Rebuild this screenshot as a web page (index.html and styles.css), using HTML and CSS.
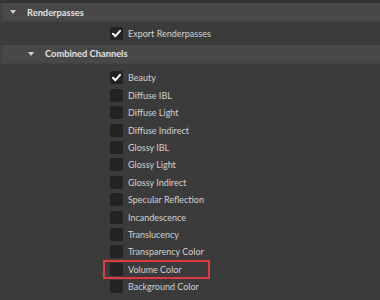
FILE: index.html
```html
<!DOCTYPE html>
<html>
<head>
<meta charset="utf-8">
<link rel="stylesheet" href="styles.css">
</head>
<body>
<div class="panel">
  <div class="header"><span class="tri"></span><span class="title">Renderpasses</span></div>
  <div class="section first">
    <div class="row"><span class="box on"><svg viewBox="0 0 13 13"><path d="M3 6.8 L5.4 9.2 L10 3.8" /></svg></span><span class="label">Export Renderpasses</span></div>
  </div>
  <div class="header sub"><span class="tri"></span><span class="title">Combined Channels</span></div>
  <div class="section list">
    <div class="row"><span class="box on"><svg viewBox="0 0 13 13"><path d="M3 6.8 L5.4 9.2 L10 3.8" /></svg></span><span class="label">Beauty</span></div>
    <div class="row"><span class="box"></span><span class="label">Diffuse IBL</span></div>
    <div class="row"><span class="box"></span><span class="label">Diffuse Light</span></div>
    <div class="row"><span class="box"></span><span class="label">Diffuse Indirect</span></div>
    <div class="row"><span class="box"></span><span class="label">Glossy IBL</span></div>
    <div class="row"><span class="box"></span><span class="label">Glossy Light</span></div>
    <div class="row"><span class="box"></span><span class="label">Glossy Indirect</span></div>
    <div class="row"><span class="box"></span><span class="label">Specular Reflection</span></div>
    <div class="row"><span class="box"></span><span class="label">Incandescence</span></div>
    <div class="row"><span class="box"></span><span class="label">Translucency</span></div>
    <div class="row"><span class="box"></span><span class="label">Transparency Color</span></div>
    <div class="row highlight"><span class="box"></span><span class="label">Volume Color</span></div>
    <div class="row"><span class="box"></span><span class="label">Background Color</span></div>
  </div>
</div>
</body>
</html>
```
FILE: styles.css
```css
html, body {
  margin: 0;
  padding: 0;
  background: #3b3b3b;
  height: 300px;
  overflow: hidden;
}
.panel {
  border-top: 3px solid #333333;
  font-family: Lato, "Open Sans", sans-serif;
  font-size: 9px;
  color: #d2d2d2;
}
.header {
  height: 18px;
  background: #484848;
  border-left: 2px solid #404040;
  border-bottom: 1px solid #424242;
  display: flex;
  align-items: center;
  padding-left: 8px;
  gap: 11px;
}
.header.sub {
  padding-left: 26px;
}
.tri {
  width: 0;
  height: 0;
  border-left: 3px solid transparent;
  border-right: 3px solid transparent;
  border-top: 4px solid #d0d0d0;
}
.title {
  font-weight: 700;
  font-size: 9.3px;
  color: #e2e2e2;
}
.section.first {
  padding: 3px 0 2.6px 0;
}
.section.list {
  padding-top: 5.3px;
}
.row {
  height: 17.4px;
  display: flex;
  align-items: center;
  padding-left: 110px;
  gap: 5px;
  position: relative;
}
.box {
  width: 13px;
  height: 13px;
  border-radius: 2px;
  background: #232323;
  display: flex;
}
.box svg {
  width: 13px;
  height: 13px;
}
.box svg path {
  fill: none;
  stroke: #ffffff;
  stroke-width: 2;
  stroke-linecap: round;
  stroke-linejoin: round;
}
.label {
  font-size: 9px;
}
.highlight::after {
  content: "";
  position: absolute;
  left: 103px;
  top: -0.5px;
  width: 103px;
  height: 15px;
  border: 2px solid #e0393e;
}
```
